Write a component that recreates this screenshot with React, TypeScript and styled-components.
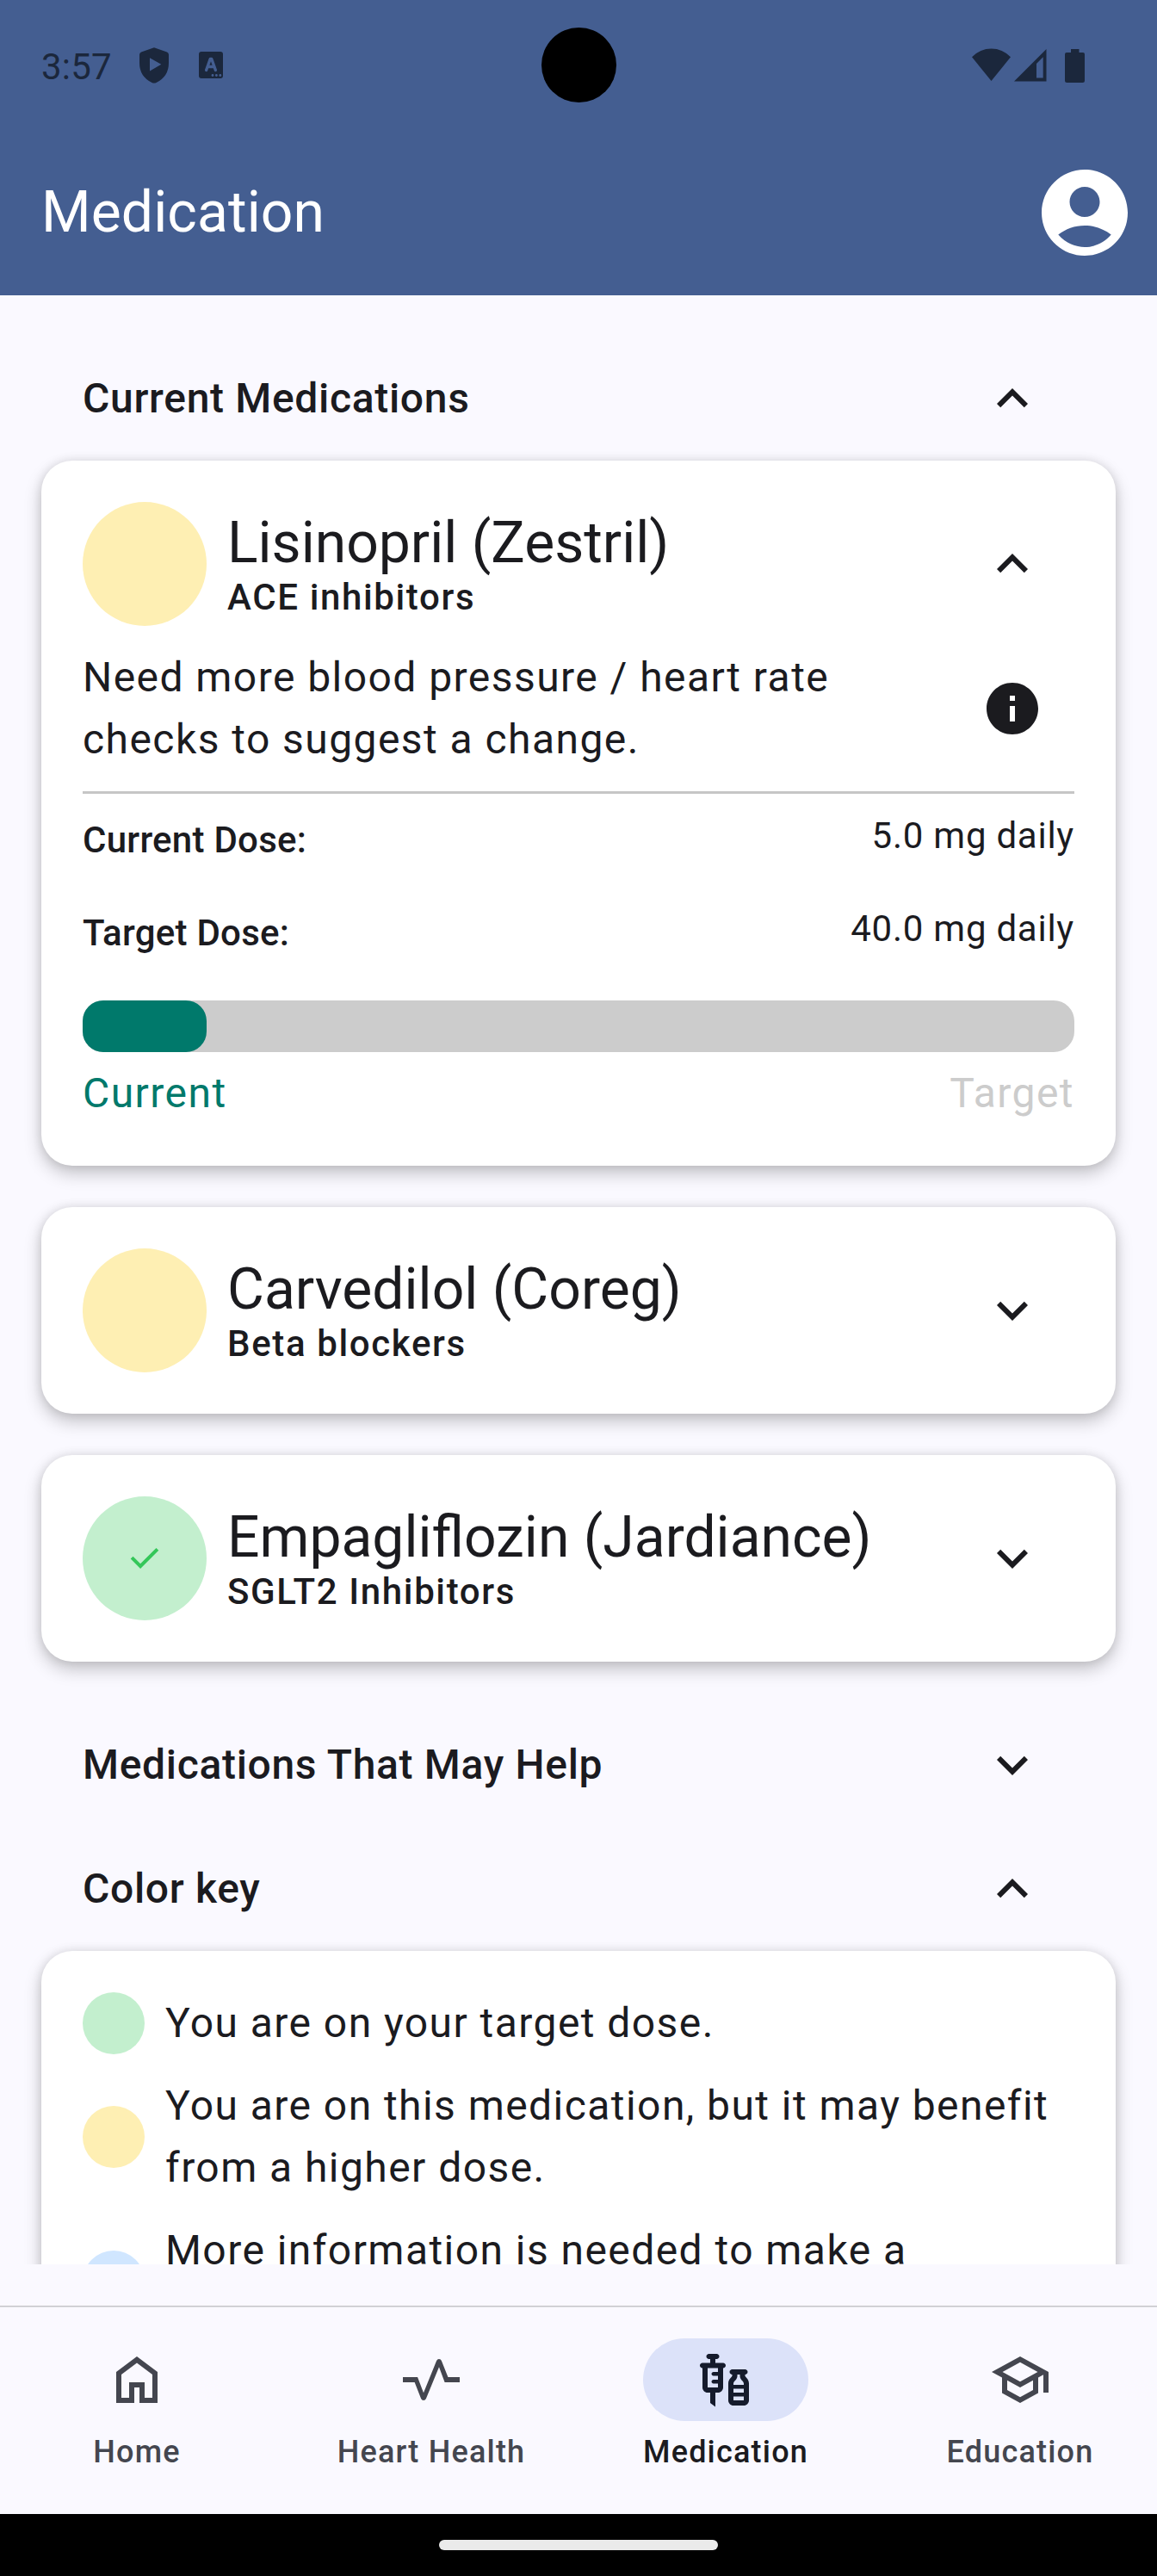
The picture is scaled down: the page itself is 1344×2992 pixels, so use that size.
import React from "react";
import styled, { createGlobalStyle, css } from "styled-components";
import {
  MdExpandLess,
  MdExpandMore,
  MdInfo,
  MdOutlineVaccines,
  MdOutlineSchool,
} from "react-icons/md";

const ink = "#1b1b1f";
const surface = "#faf9ff";
const statusInk = "#1b273c";

const GlobalStyle = createGlobalStyle`
  body { margin: 0; background: ${surface}; }
  * { box-sizing: border-box; }
  svg { display: block; flex: none; }
`;

const Screen = styled.div`
  width: 1344px;
  height: 2992px;
  display: flex;
  flex-direction: column;
  overflow: hidden;
  background: ${surface};
  color: ${ink};
  font-family: Roboto, "Liberation Sans", sans-serif;
`;

const Header = styled.header`
  position: relative;
  flex: none;
  height: 343px;
  display: flex;
  flex-direction: column;
  background: #445e91;
`;

const StatusBar = styled.div`
  height: 151px;
  display: flex;
  align-items: center;
  padding: 0 84px 0 48px;
  color: ${statusInk};
`;

const Clock = styled.span`
  font-size: 42px;
  line-height: 50px;
  padding-top: 4px;
  width: 114px;
  letter-spacing: 0.2px;
`;

const NoticeIcons = styled.div`
  display: flex;
  align-items: center;
  gap: 35px;
  flex: 1;
`;

const SystemIcons = styled.div`
  display: flex;
  align-items: center;
`;

const Camera = styled.div`
  position: absolute;
  left: 628.5px;
  top: 31.5px;
  width: 87px;
  height: 87px;
  border-radius: 50%;
  background: #000;
`;

const TitleBar = styled.div`
  height: 192px;
  display: flex;
  align-items: center;
  justify-content: space-between;
  padding: 0 24px 0 48px;
  color: #fff;
`;

const Title = styled.h1`
  margin: 0;
  font-size: 66px;
  line-height: 84px;
  font-weight: 400;
  letter-spacing: 0.1px;
`;

const Scroll = styled.main`
  flex: none;
  height: 2287px;
  overflow: hidden;
  padding: 48px 48px 0;
`;

const SectionHeader = styled.div`
  height: 144px;
  display: flex;
  align-items: center;
  justify-content: space-between;
  padding: 0 84px 0 48px;
  font-size: 48px;
  line-height: 72px;
  font-weight: 500;
  letter-spacing: 0.68px;
`;

const CardList = styled.div`
  display: flex;
  flex-direction: column;
  gap: 48px;
  padding-bottom: 48px;
`;

const Card = styled.section`
  padding: 48px;
  border-radius: 36px;
  background: #fff;
  box-shadow: 0 9px 20px rgba(0, 0, 0, 0.22), 0 0 12px rgba(0, 0, 0, 0.1);
`;

const CardHead = styled.div`
  height: 144px;
  display: flex;
  align-items: center;
  padding-right: 36px;
`;

const Dot = styled.div<{ $size: number; $color: string }>`
  flex: none;
  width: ${(p) => p.$size}px;
  height: ${(p) => p.$size}px;
  border-radius: 50%;
  background: ${(p) => p.$color};
  display: flex;
  align-items: center;
  justify-content: center;
  color: #34c759;
`;

const Names = styled.div`
  flex: 1;
  margin-left: 24px;
  padding-top: 2px;
`;

const DrugName = styled.div`
  font-size: 66px;
  line-height: 76px;
`;

const DrugClass = styled.div`
  font-size: 42px;
  line-height: 50px;
  font-weight: 500;
  letter-spacing: 1.63px;
`;

const Advice = styled.div`
  display: flex;
  align-items: center;
  justify-content: space-between;
  margin-top: 24px;
  padding: 0 36px 24px 0;
  border-bottom: 3px solid #c6c6c6;
`;

const bodyLarge = css`
  font-size: 48px;
  line-height: 72px;
  letter-spacing: 1.44px;
`;

const AdviceText = styled.p`
  ${bodyLarge}
  margin: 0;
  width: 960px;
`;

const DoseRow = styled.div`
  display: flex;
  justify-content: space-between;
  height: 108px;
  padding-top: 24px;
  font-size: 42px;
  line-height: 60px;
`;

const DoseLabel = styled.span`
  font-weight: 500;
  letter-spacing: 0.25px;
`;

const DoseValue = styled.span`
  letter-spacing: 0.75px;
  margin-top: -5px;
`;

const Track = styled.div`
  height: 60px;
  margin-top: 24px;
  border-radius: 24px;
  background: #cccccc;
`;

const Fill = styled.div`
  height: 60px;
  border-radius: 24px;
  background: #00796b;
`;

const Scale = styled.div`
  ${bodyLarge}
  display: flex;
  justify-content: space-between;
  margin-top: 12px;
`;

const ScaleText = styled.span<{ $color: string }>`
  color: ${(p) => p.$color};
`;

const KeyCard = styled(Card)`
  display: flex;
  flex-direction: column;
  gap: 24px;
`;

const KeyRow = styled.div<{ $lines: number }>`
  ${bodyLarge}
  display: flex;
  align-items: center;
  gap: 24px;
  height: ${(p) => p.$lines * 72}px;
`;

const KeyText = styled.div`
  flex: 1;
  align-self: flex-start;
`;

const NavBar = styled.nav`
  flex: none;
  height: 242px;
  margin-top: 48px;
  border-top: 1px solid #c5c5c9;
  box-shadow: inset 0 1px 0 #dedee3;
  display: flex;
  gap: 24px;
  padding-top: 37px;
`;

const NavItem = styled.div<{ $active?: boolean }>`
  flex: 1;
  display: flex;
  flex-direction: column;
  align-items: center;
  gap: 12px;
  font-size: 36px;
  line-height: 48px;
  font-weight: 500;
  letter-spacing: 1.2px;
  color: ${(p) => (p.$active ? ink : "#44464f")};
`;

const Pill = styled.div<{ $active?: boolean }>`
  width: 192px;
  height: 96px;
  border-radius: 48px;
  display: flex;
  align-items: center;
  justify-content: center;
  background: ${(p) => (p.$active ? "#dce2f9" : "transparent")};
  color: ${(p) => (p.$active ? "#151b2c" : "#44464f")};
`;

const GestureBar = styled.footer`
  flex: none;
  height: 72px;
  display: flex;
  justify-content: center;
  padding-top: 30px;
  background: #000;
`;

const Handle = styled.div`
  width: 324px;
  height: 12px;
  border-radius: 6px;
  background: #eaeaea;
`;

const ShieldIcon = () => (
  <svg width="34" height="42" viewBox="0 0 34 42" fill="currentColor">
    <path
      fillRule="evenodd"
      d="M17 0.3 L32 5.6 Q34 6.4 34 8.5 V18 Q34 34 19.5 41 Q17 42 14.5 41 Q0 34 0 18 V8.5 Q0 6.4 2 5.6 Z M12 12.2 V27.5 L25.3 19.8 Z"
    />
  </svg>
);

const KeyboardIcon = () => (
  <svg width="28" height="31" viewBox="0 0 28 31">
    <rect width="28" height="31" rx="3" fill="currentColor" />
    <path
      d="M8.600 21.500 13.200 8.500H14.800L19.400 21.500M10.500 17.500H17.500"
      fill="none"
      stroke="#445e91"
      strokeWidth="3.400"
      strokeLinecap="round"
      strokeLinejoin="round"
    />
    <g fill="#445e91">
      <circle cx="16" cy="27.500" r="1.400" />
      <circle cx="20.400" cy="27.500" r="1.400" />
      <circle cx="24.800" cy="27.500" r="1.400" />
    </g>
  </svg>
);

const SystemGlyphs = () => (
  <svg width="131" height="40" viewBox="0 0 131 40" fill="currentColor">
    <path d="M22.5 38 0 10.3Q9.5 0.5 22.5 0.5T45 10.3Z" />
    <path fillRule="evenodd" d="M86.5 1V38.5H49ZM82.7 10.3 75 18V34.4H82.7Z" />
    <path d="M115 1h9.5v4H129a2 2 0 0 1 2 2V37.5a2.5 2.5 0 0 1-2.5 2.5H110.5a2.5 2.5 0 0 1-2.5-2.5V7a2 2 0 0 1 2-2h5z" />
  </svg>
);

const AccountIcon = () => (
  <svg width="120" height="120" viewBox="0 0 24 24" fill="currentColor">
    <path d="M12 2C6.48 2 2 6.48 2 12s4.48 10 10 10 10-4.48 10-10S17.52 2 12 2zm0 4c1.93 0 3.5 1.57 3.5 3.5S13.93 13 12 13s-3.5-1.57-3.5-3.5S10.07 6 12 6zm0 14c-2.03 0-4.43-.82-6.14-2.88C7.55 15.8 9.68 15 12 15s4.45.8 6.14 2.12C16.43 19.18 14.03 20 12 20z" />
  </svg>
);

const HomeIcon = () => (
  <svg width="72" height="72" viewBox="0 0 24 24" fill="currentColor">
    <path d="M6 19h3v-6h6v6h3v-9l-6-4.5L6 10zM4 21V9l8-6 8 6v12h-7v-6h-2v6z" />
  </svg>
);

const PulseIcon = () => (
  <svg width="72" height="72" viewBox="0 0 24 24" fill="currentColor">
    <path d="M1 13v-2h5.68L9 17.05 14.03 4.65Q14.3 4 15 4t.95.65L18.48 11H23v2h-5.8L15 7.1 9.97 19.35Q9.7 20 9 20t-.97-.65L5.55 13z" />
  </svg>
);

const CheckIcon = () => (
  <svg width="48" height="48" viewBox="0 0 24 24" fill="currentColor">
    <path d="M9.55 18l-5.7-5.7 1.425-1.425L9.55 15.15l9.175-9.175L20.15 7.4z" />
  </svg>
);

const Chevron = ({ open }: { open?: boolean }) =>
  open ? <MdExpandLess size={72} /> : <MdExpandMore size={72} />;

const yellow = "#feefb3";
const green = "#c3efce";

type DrugProps = {
  name: string;
  group: string;
  color: string;
  open?: boolean;
  done?: boolean;
  children?: React.ReactNode;
};

const Drug = ({ name, group, color, open, done, children }: DrugProps) => (
  <Card>
    <CardHead>
      <Dot $size={144} $color={color}>
        {done && <CheckIcon />}
      </Dot>
      <Names>
        <DrugName>{name}</DrugName>
        <DrugClass>{group}</DrugClass>
      </Names>
      <Chevron open={open} />
    </CardHead>
    {children}
  </Card>
);

const doses = { current: 5, target: 40 };

export default function App() {
  return (
    <>
      <GlobalStyle />
      <Screen>
        <Header>
          <StatusBar>
            <Clock>3:57</Clock>
            <NoticeIcons>
              <ShieldIcon />
              <KeyboardIcon />
            </NoticeIcons>
            <SystemIcons>
              <SystemGlyphs />
            </SystemIcons>
          </StatusBar>
          <Camera />
          <TitleBar>
            <Title>Medication</Title>
            <AccountIcon />
          </TitleBar>
        </Header>

        <Scroll>
          <SectionHeader>
            Current Medications
            <Chevron open />
          </SectionHeader>
          <CardList>
            <Drug name="Lisinopril (Zestril)" group="ACE inhibitors" color={yellow} open>
              <Advice>
                <AdviceText>
                  Need more blood pressure / heart rate checks to suggest a change.
                </AdviceText>
                <MdInfo size={72} />
              </Advice>
              <DoseRow>
                <DoseLabel>Current Dose:</DoseLabel>
                <DoseValue>{doses.current.toFixed(1)} mg daily</DoseValue>
              </DoseRow>
              <DoseRow>
                <DoseLabel>Target Dose:</DoseLabel>
                <DoseValue>{doses.target.toFixed(1)} mg daily</DoseValue>
              </DoseRow>
              <Track>
                <Fill style={{ width: `${(doses.current / doses.target) * 100}%` }} />
              </Track>
              <Scale>
                <ScaleText $color="#00796b">Current</ScaleText>
                <ScaleText $color="#cccccc">Target</ScaleText>
              </Scale>
            </Drug>
            <Drug name="Carvedilol (Coreg)" group="Beta blockers" color={yellow} />
            <Drug name="Empagliflozin (Jardiance)" group="SGLT2 Inhibitors" color={green} done />
          </CardList>

          <SectionHeader>
            Medications That May Help
            <Chevron />
          </SectionHeader>
          <SectionHeader>
            Color key
            <Chevron open />
          </SectionHeader>
          <KeyCard>
            <KeyRow $lines={1}>
              <Dot $size={72} $color={green} />
              <KeyText>You are on your target dose.</KeyText>
            </KeyRow>
            <KeyRow $lines={2}>
              <Dot $size={72} $color={yellow} />
              <KeyText>You are on this medication, but it may benefit from a higher dose.</KeyText>
            </KeyRow>
            <KeyRow $lines={2}>
              <Dot $size={72} $color="#d0e6ff" />
              <KeyText>More information is needed to make a</KeyText>
            </KeyRow>
          </KeyCard>
        </Scroll>

        <NavBar>
          <NavItem>
            <Pill>
              <HomeIcon />
            </Pill>
            Home
          </NavItem>
          <NavItem>
            <Pill>
              <PulseIcon />
            </Pill>
            Heart Health
          </NavItem>
          <NavItem $active>
            <Pill $active>
              <MdOutlineVaccines size={72} />
            </Pill>
            Medication
          </NavItem>
          <NavItem>
            <Pill>
              <MdOutlineSchool size={72} />
            </Pill>
            Education
          </NavItem>
        </NavBar>
        <GestureBar>
          <Handle />
        </GestureBar>
      </Screen>
    </>
  );
}
